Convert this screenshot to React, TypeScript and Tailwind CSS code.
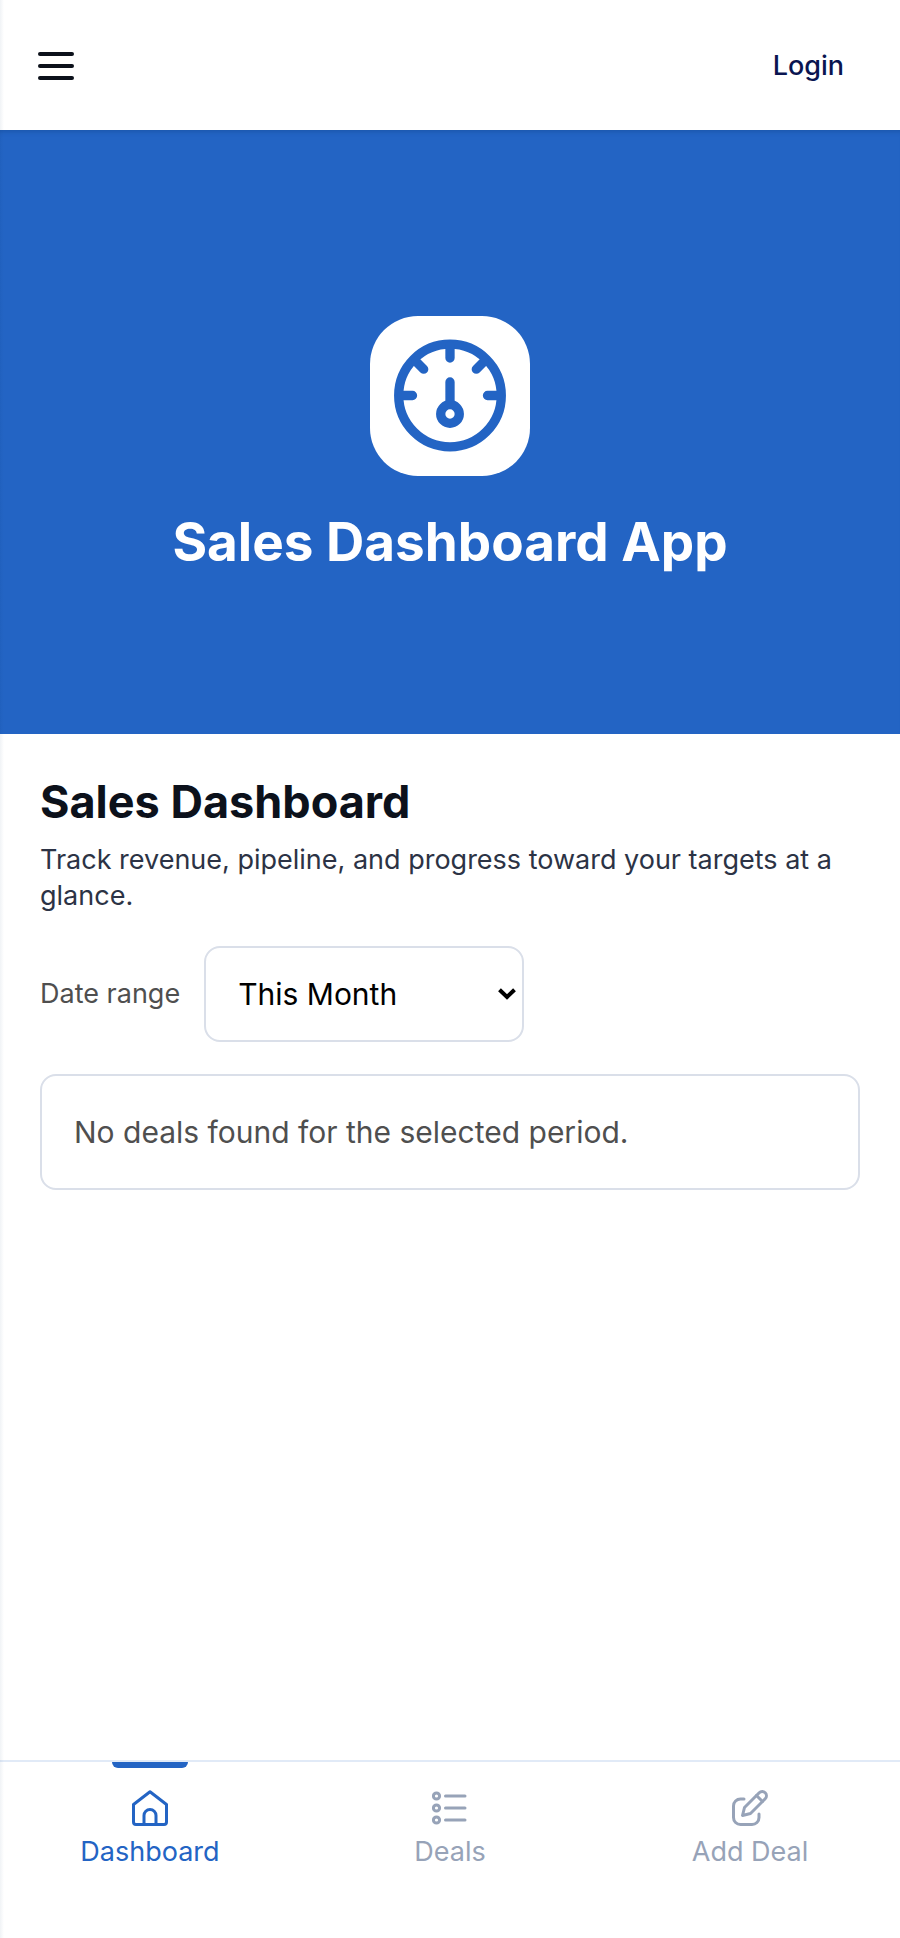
import { useState } from "react";

function MenuButton() {
  return (
    <button type="button" aria-label="Open menu" className="flex w-9 flex-col gap-2 text-[#0c111b]">
      <span className="h-1 w-full rounded-full bg-current" />
      <span className="h-1 w-full rounded-full bg-current" />
      <span className="h-1 w-full rounded-full bg-current" />
    </button>
  );
}

function GaugeIcon() {
  return (
    <svg viewBox="0 0 160 160" className="size-40" fill="none" stroke="#2364c4" strokeWidth="9.3" strokeLinecap="round" aria-hidden="true">
      <circle cx="80" cy="79.5" r="51.3" />
      <path d="M80 30v12M80 66v20M32 79.5h10.500M128 79.500h-10.500M46 45.500l7.700 7.700M114 45.500l-7.700 7.700" />
      <circle cx="80" cy="98" r="9.300" />
    </svg>
  );
}

function HomeIcon() {
  return (
    <svg viewBox="0 0 36 36" className="size-9" fill="none" stroke="currentColor" strokeWidth="3" strokeLinejoin="round" aria-hidden="true">
      <path d="M18 1.800 34.500 14.500V32a2.500 2.500 0 0 1-2.500 2.500H4A2.500 2.500 0 0 1 1.500 32V14.500Z" />
      <path d="M12 34V25.500a6 6 0 0 1 12 0V34" />
    </svg>
  );
}

function ListIcon() {
  return (
    <svg viewBox="0 0 36 36" className="size-9" fill="none" stroke="currentColor" strokeWidth="3" strokeLinecap="round" aria-hidden="true">
      <circle cx="4.500" cy="6" r="3.100" />
      <circle cx="4.500" cy="18" r="3.100" />
      <circle cx="4.500" cy="30" r="3.100" />
      <path d="M13.500 6H33M13.500 18H33M13.500 30H33" />
    </svg>
  );
}

function EditIcon() {
  return (
    <svg viewBox="0 0 36 36" className="size-9" fill="none" stroke="currentColor" strokeWidth="3" strokeLinecap="round" strokeLinejoin="round" aria-hidden="true">
      <path d="M12 9H8.500a7 7 0 0 0-7 7v11.500a7 7 0 0 0 7 7H20a7 7 0 0 0 7-7V24" />
      <path d="M10.500 25.500 12.500 17.500 27.200 2.800a4.200 4.200 0 0 1 6 6L18.500 23.500Z" />
      <path d="m24.500 5.500 6 6" />
    </svg>
  );
}

const tabs = [
  { name: "Dashboard", Icon: HomeIcon },
  { name: "Deals", Icon: ListIcon },
  { name: "Add Deal", Icon: EditIcon },
];

export default function App() {
  const [active, setActive] = useState("Dashboard");

  return (
    <div className="relative flex min-h-screen flex-col bg-white font-['Inter',sans-serif] text-[#0c111b]">
      <div className="pointer-events-none absolute inset-y-0 left-0 w-1 bg-linear-to-r from-[#0c3a6b]/6 to-transparent" />
      <header className="flex h-[130px] items-center justify-between pt-0.5 pr-14 pl-[38px]">
        <MenuButton />
        <a href="#login" className="text-[27px] font-medium text-[#0a1551]">Login</a>
      </header>

      <section className="flex h-[604px] flex-col items-center justify-center gap-8 bg-[#2364c4] pt-7 shadow-[inset_0_6px_4px_-4px_#1c57ad]">
        <div className="rounded-[48px] bg-white">
          <GaugeIcon />
        </div>
        <h1 className="text-[53px] leading-[68px] font-bold text-white">Sales Dashboard App</h1>
      </section>

      <main className="flex flex-1 flex-col px-10 pt-10">
        <h2 className="text-[45px] leading-[56px] font-bold">Sales Dashboard</h2>
        <p className="mt-3 text-[27px] leading-9 text-[#2c3345]">
          Track revenue, pipeline, and progress toward your targets at a glance.
        </p>
        <div className="mt-8 flex items-center gap-6">
          <label htmlFor="range" className="text-[27px] text-[#4f4f4f]">Date range</label>
          <div className="relative">
            <select id="range" className="h-24 w-80 appearance-none rounded-2xl border-2 border-[#dadfe9] bg-white px-8 text-[30px] text-black">
              <option>This Month</option>
              <option>Last Month</option>
              <option>This Quarter</option>
              <option>This Year</option>
            </select>
            <svg viewBox="0 0 18 12" className="pointer-events-none absolute top-[42px] right-2 h-3 w-[18px]" fill="none" stroke="#000" strokeWidth="4" aria-hidden="true">
              <path d="m1.500 1.800 7.500 7.200 7.500-7.200" />
            </svg>
          </div>
        </div>
        <div className="mt-8 rounded-2xl border-2 border-[#dadfe9] px-8 py-9 text-[30px] leading-10 text-[#4f4f4f]">
          No deals found for the selected period.
        </div>
      </main>

      <nav className="grid h-[178px] grid-cols-3 border-t-2 border-[#e1eaf7]">
        {tabs.map(({ name, Icon }) => (
          <button
            key={name}
            type="button"
            onClick={() => setActive(name)}
            className={`relative flex flex-col items-center gap-2 pt-7 text-[27px] leading-9 ${active === name ? "text-[#2364c4]" : "text-[#97a3b8]"}`}
          >
            {active === name && <span className="absolute top-0 h-1.5 w-19 rounded-b-md bg-[#2364c4]" />}
            <Icon />
            {name}
          </button>
        ))}
      </nav>
    </div>
  );
}
